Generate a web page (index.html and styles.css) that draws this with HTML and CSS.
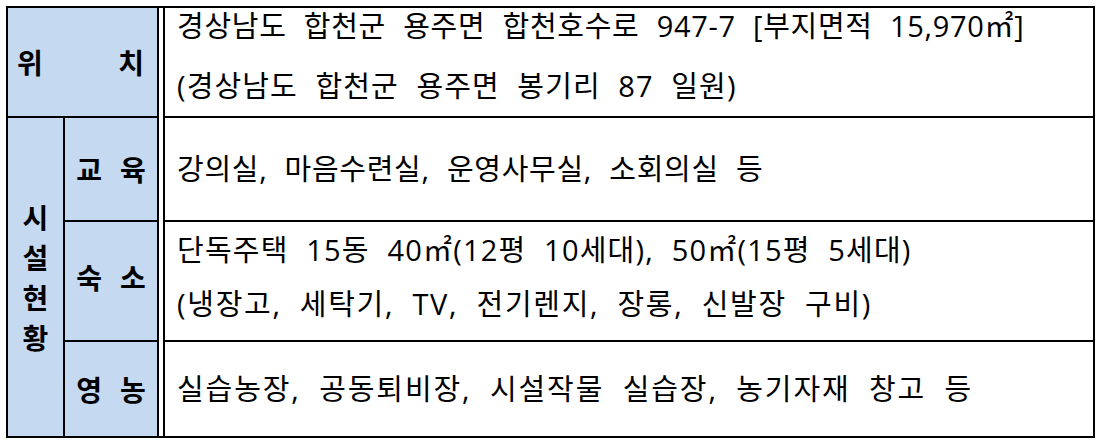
FILE: index.html
```html
<!DOCTYPE html>
<html lang="ko">
<head>
<meta charset="utf-8">
<title>시설 개요</title>
<link rel="stylesheet" href="styles.css">
</head>
<body>
<div class="tbl">
  <div class="hd hd-loc"><span>위</span><span>치</span></div>
  <div class="dbl"></div>
  <div class="cell row1">
    <p class="ln l1a">경상남도 합천군 용주면 합천호수로 947-7 [부지면적 15,970㎡]</p>
    <p class="ln l1b">(경상남도 합천군 용주면 봉기리 87 일원)</p>
  </div>
  <div class="hd hd-fac"><span>시</span><span>설</span><span>현</span><span>황</span></div>
  <div class="hd sub row2">교 육</div>
  <div class="cell row2"><p class="ln l2">강의실, 마음수련실, 운영사무실, 소회의실 등</p></div>
  <div class="hd sub row3">숙 소</div>
  <div class="cell row3">
    <p class="ln l3a">단독주택 15동 40㎡(12평 10세대), 50㎡(15평 5세대)</p>
    <p class="ln l3b">(냉장고, 세탁기, TV, 전기렌지, 장롱, 신발장 구비)</p>
  </div>
  <div class="hd sub row4">영 농</div>
  <div class="cell row4"><p class="ln l4">실습농장, 공동퇴비장, 시설작물 실습장, 농기자재 창고 등</p></div>
</div>
</body>
</html>
```
FILE: styles.css
```css
html, body {
  margin: 0;
  padding: 0;
  background: #fff;
}
body {
  font-family: "Open Sans", "Noto Sans CJK KR", sans-serif;
  color: #000;
}
.tbl {
  display: grid;
  grid-template-columns: 55px 92px 4px 928px;
  grid-template-rows: 108px 102px 118px 94px;
  gap: 2px;
  background: #000;
  border: 2px solid #000;
  width: fit-content;
  margin: 6px 0 0 6px;
}
.hd {
  background: #c5d9f1;
  font-family: "Noto Sans CJK KR", sans-serif;
  font-weight: 700;
  font-size: 28px;
  display: flex;
  align-items: center;
  justify-content: center;
}
.hd-loc {
  grid-column: 1 / 3;
  grid-row: 1;
  justify-content: space-between;
  padding: 0 13px 0 9px;
}
.hd-fac {
  grid-column: 1;
  grid-row: 2 / 5;
  flex-direction: column;
  line-height: 40px;
}
.sub {
  grid-column: 2;
  word-spacing: 10px;
}
.dbl {
  grid-column: 3;
  grid-row: 1 / -1;
  background: #fff;
}
.cell {
  grid-column: 4;
  background: #fff;
  display: flex;
  flex-direction: column;
  justify-content: center;
  padding-left: 12px;
  font-size: 29px;
  word-spacing: 9px;
}
.ln {
  margin: 0;
  line-height: 58px;
  white-space: nowrap;
}
.row1 { grid-row: 1; padding-bottom: 12px; }
.row1 .ln { line-height: 60px; }
.row2 { grid-row: 2; }
.row3 { grid-row: 3; padding-bottom: 8px; }
.row3 .ln { line-height: 54px; }
.row4 { grid-row: 4; }
.l1a { letter-spacing: 0.7px; }
.l1b { letter-spacing: 1.1px; }
.l2 { letter-spacing: 0.7px; }
.l3a { letter-spacing: 1.2px; }
.l3b { letter-spacing: 1.7px; }
.l4 { letter-spacing: 1.9px; }
```
